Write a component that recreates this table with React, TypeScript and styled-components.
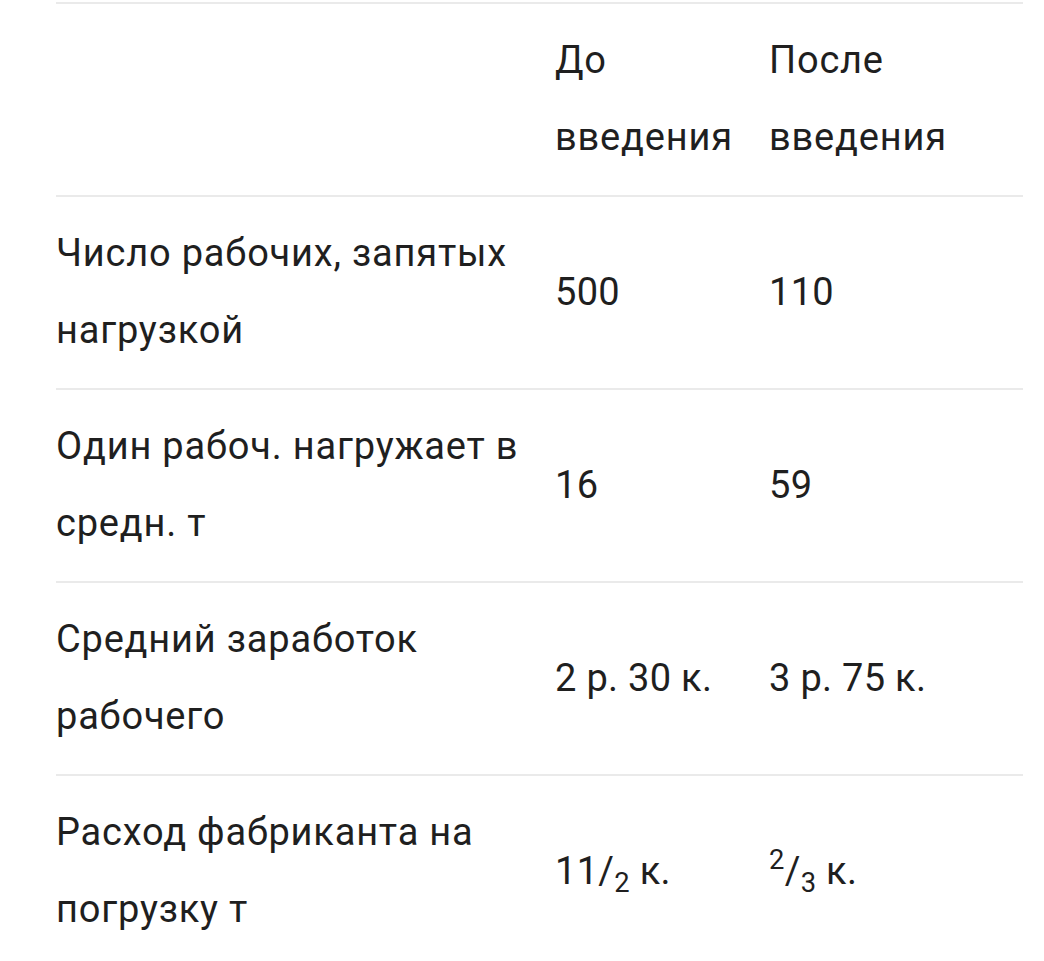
import React from "react";
import styled, { createGlobalStyle } from "styled-components";

const Global = createGlobalStyle`
  html, body { margin: 0; padding: 0; background: #ffffff; }
  body { font-family: Roboto, "Noto Sans", sans-serif; color: #1f1f1f; }
`;

const Page = styled.div`
  padding: 2px 21px 0 56px;
`;

const Table = styled.div`
  display: flex;
  flex-direction: column;
`;

const Row = styled.div`
  display: grid;
  grid-template-columns: 499px 214px 1fr;
  align-items: center;
  border-top: 2px solid #eaeaea;
  padding: 18px 0 19px;
`;

const Cell = styled.div<{ $wide?: boolean }>`
  font-size: 38px;
  line-height: 77px;
  letter-spacing: ${(p) => (p.$wide ? "0.8px" : "0.3px")};
  padding-right: 24px;
`;

const Sup = styled.sup`
  font-size: 0.72em;
  line-height: 0;
  vertical-align: 0.55em;
`;

const Sub = styled.sub`
  font-size: 0.72em;
  line-height: 0;
  vertical-align: -0.3em;
`;

const rows: [React.ReactNode, React.ReactNode, React.ReactNode][] = [
  ["", <>До<br />введения</>, <>После<br />введения</>],
  ["Число рабочих, запятых нагрузкой", "500", "110"],
  ["Один рабоч. нагружает в средн. т", "16", "59"],
  ["Средний заработок рабочего", "2 р. 30 к.", "3 р. 75 к."],
  [
    "Расход фабриканта на погрузку т",
    <>11/<Sub>2</Sub> к.</>,
    <><Sup>2</Sup>/<Sub>3</Sub> к.</>,
  ],
];

export default function App() {
  return (
    <>
      <Global />
      <Page>
        <Table>
          {rows.map((r, i) => (
            <Row key={i}>
              <Cell $wide>{r[0]}</Cell>
              <Cell $wide={i === 0}>{r[1]}</Cell>
              <Cell $wide={i === 0}>{r[2]}</Cell>
            </Row>
          ))}
        </Table>
      </Page>
    </>
  );
}
